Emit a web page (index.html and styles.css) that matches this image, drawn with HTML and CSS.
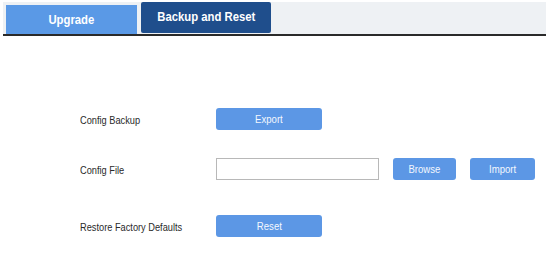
FILE: index.html
```html
<!DOCTYPE html>
<html>
<head>
<meta charset="utf-8">
<link rel="stylesheet" href="styles.css">
</head>
<body>
<div class="page">
  <div class="tabbar">
    <div class="tab tab-light"><span class="squeeze">Upgrade</span></div>
    <div class="tab tab-dark"><span class="squeeze">Backup and Reset</span></div>
  </div>
  <div class="form">
    <div class="row row-backup">
      <div class="label"><span class="squeeze-left">Config Backup</span></div>
      <button class="btn btn-wide"><span class="squeeze">Export</span></button>
    </div>
    <div class="row row-file">
      <div class="label"><span class="squeeze-left">Config File</span></div>
      <input class="file-input" type="text">
      <button class="btn btn-small btn-browse"><span class="squeeze">Browse</span></button>
      <button class="btn btn-small btn-import"><span class="squeeze">Import</span></button>
    </div>
    <div class="row row-reset">
      <div class="label"><span class="squeeze-left">Restore Factory Defaults</span></div>
      <button class="btn btn-wide"><span class="squeeze">Reset</span></button>
    </div>
  </div>
</div>
</body>
</html>
```
FILE: styles.css
```css
* { box-sizing: border-box; }
html, body { margin: 0; padding: 0; background: #ffffff; }
body { font-family: "Liberation Sans", Arial, sans-serif; width: 550px; height: 272px; overflow: hidden; }
.page { padding: 2px 4px 0 3px; }
.squeeze { display: inline-block; transform: scaleX(0.87); transform-origin: center; white-space: nowrap; }
.squeeze-left { display: inline-block; transform: scaleX(0.84); transform-origin: left center; white-space: nowrap; }
.tabbar {
  display: flex;
  align-items: flex-end;
  height: 34px;
  background: #eef1f4;
  border-bottom: 2px solid #2a2a2a;
  padding-left: 3px;
  gap: 4px;
  width: 543px;
}
.tab {
  color: #ffffff;
  font-weight: bold;
  font-size: 13px;
  display: flex;
  align-items: center;
  justify-content: center;
}
.tab-light {
  width: 131px;
  height: 29px;
  background: #5a99e6;
}
.tab-dark {
  width: 130px;
  height: 31px;
  margin-bottom: 1px;
  background: #1f4e8c;
  border-radius: 2px;
  padding-bottom: 3px;
}
.form { padding-left: 77px; padding-top: 72px; }
.row { display: flex; align-items: center; height: 22px; }
.row-file { margin-top: 28px; }
.row-reset { margin-top: 35px; }
.label { width: 136px; font-size: 11px; color: #2a2a2a; padding-top: 2px; }
.btn {
  border: none;
  background: #5c97e5;
  color: #f4f8fe;
  font-family: "Liberation Sans", Arial, sans-serif;
  font-size: 11px;
  height: 22px;
  border-radius: 3px;
  padding: 0;
}
.btn-wide { width: 106px; }
.file-input {
  width: 163px;
  height: 22px;
  border: 1px solid #b8b8b8;
  background: #ffffff;
  margin: 0;
}
.btn-small { width: 63px; }
.btn-browse { margin-left: 14px; }
.btn-import { margin-left: 14px; width: 65px; }
```
